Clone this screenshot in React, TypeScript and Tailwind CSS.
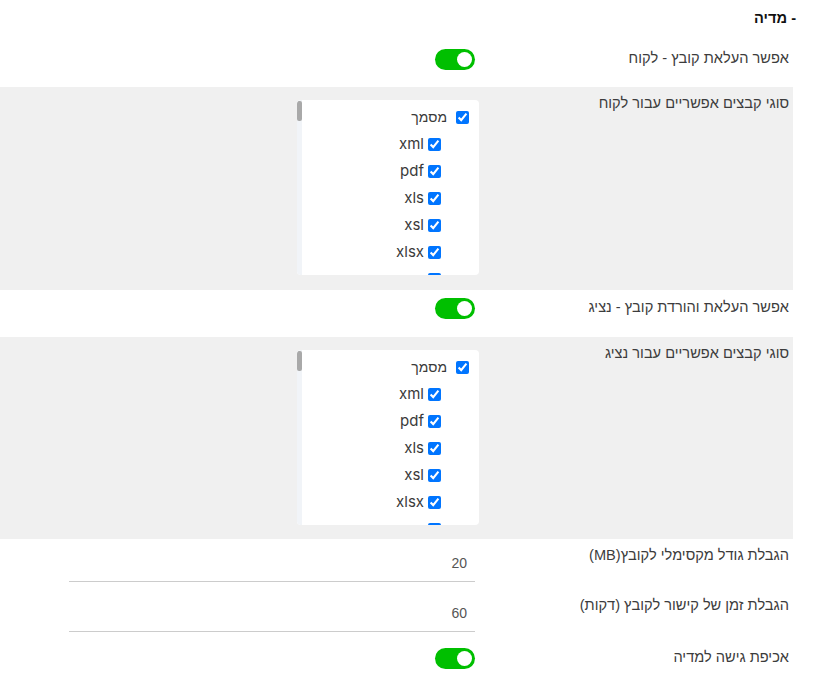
import React from 'react'

const fileTypes = ['xml', 'pdf', 'xls', 'xsl', 'xlsx', 'csv']

function Toggle() {
    return (
        <div className="w-[40px] h-[21px] rounded-full bg-[#00bf00] flex items-center justify-start px-[3px]">
            <div className="w-[15px] h-[15px] rounded-full bg-white" />
        </div>
    )
}

function TypesList() {
    return (
        <div className="relative w-[182px] h-[175px] mt-[6px] mr-[-4px] rounded-[4px] bg-white overflow-hidden">
            <ul className="pt-[4px] font-['Inter','Liberation_Sans',sans-serif] text-[15px] text-[#3a3a3a]">
                <li className="h-[27px] flex items-center gap-[9px] pr-[10px]">
                    <input type="checkbox" defaultChecked className="m-0 w-[13px] h-[13px]" />
                    <span className="font-['Liberation_Sans',sans-serif] text-[14px]">מסמך</span>
                </li>
                {fileTypes.map((t) => (
                    <li key={t} className="h-[27px] flex items-center gap-[4px] pr-[38px]">
                        <input type="checkbox" defaultChecked className="m-0 w-[13px] h-[13px]" />
                        <span dir="ltr">{t}</span>
                    </li>
                ))}
            </ul>
            {/* scrollbar sits on the left in rtl */}
            <div className="absolute left-0 top-0 bottom-0 w-[5px] bg-[#f1f4f8]">
                <div className="mt-[1px] h-[20px] w-[5px] rounded-[2px] bg-[#a9a9a9]" />
            </div>
        </div>
    )
}

function NumberField({ value }: { value: string }) {
    return (
        <div className="w-[406px] h-[37px] mt-[-1px] border-b border-[#cccccc] flex items-center pr-[8px] font-['Liberation_Sans',sans-serif] text-[14px] text-[#555]">
            {value}
        </div>
    )
}

function Row({ label, children, className }: { label: string; children: React.ReactNode; className: string }) {
    return (
        <div className={`grid grid-cols-[314px_406px] items-start pr-[4px] ${className}`}>
            <div className="text-[14.6px] leading-[18px] text-[#3c3c3c]">{label}</div>
            <div className="flex justify-start">{children}</div>
        </div>
    )
}

export default function App() {
    return (
        <div dir="rtl" className="w-[816px] bg-white font-['Liberation_Sans',sans-serif]">
            <div className="h-[40px] pt-[9px] pr-[20px] text-[14.6px] leading-[18px] font-bold text-[#111]">- מדיה</div>
            <div className="w-[793px] mr-auto">
                <Row label="אפשר העלאת קובץ - לקוח" className="h-[47px] pt-[9px]">
                    <Toggle />
                </Row>
                <Row label="סוגי קבצים אפשריים עבור לקוח" className="h-[203px] pt-[7px] bg-[#f0f0f0]">
                    <TypesList />
                </Row>
                <Row label="אפשר העלאת והורדת קובץ - נציג" className="h-[47px] pt-[8px]">
                    <Toggle />
                </Row>
                <Row label="סוגי קבצים אפשריים עבור נציג" className="h-[202px] pt-[7px] bg-[#f0f0f0]">
                    <TypesList />
                </Row>
                <Row label="הגבלת גודל מקסימלי לקובץ(MB)" className="h-[50px] pt-[7px]">
                    <NumberField value="20" />
                </Row>
                <Row label="הגבלת זמן של קישור לקובץ (דקות)" className="h-[50px] pt-[7px]">
                    <NumberField value="60" />
                </Row>
                <Row label="אכיפת גישה למדיה" className="h-[44px] pt-[9px]">
                    <Toggle />
                </Row>
            </div>
        </div>
    )
}
